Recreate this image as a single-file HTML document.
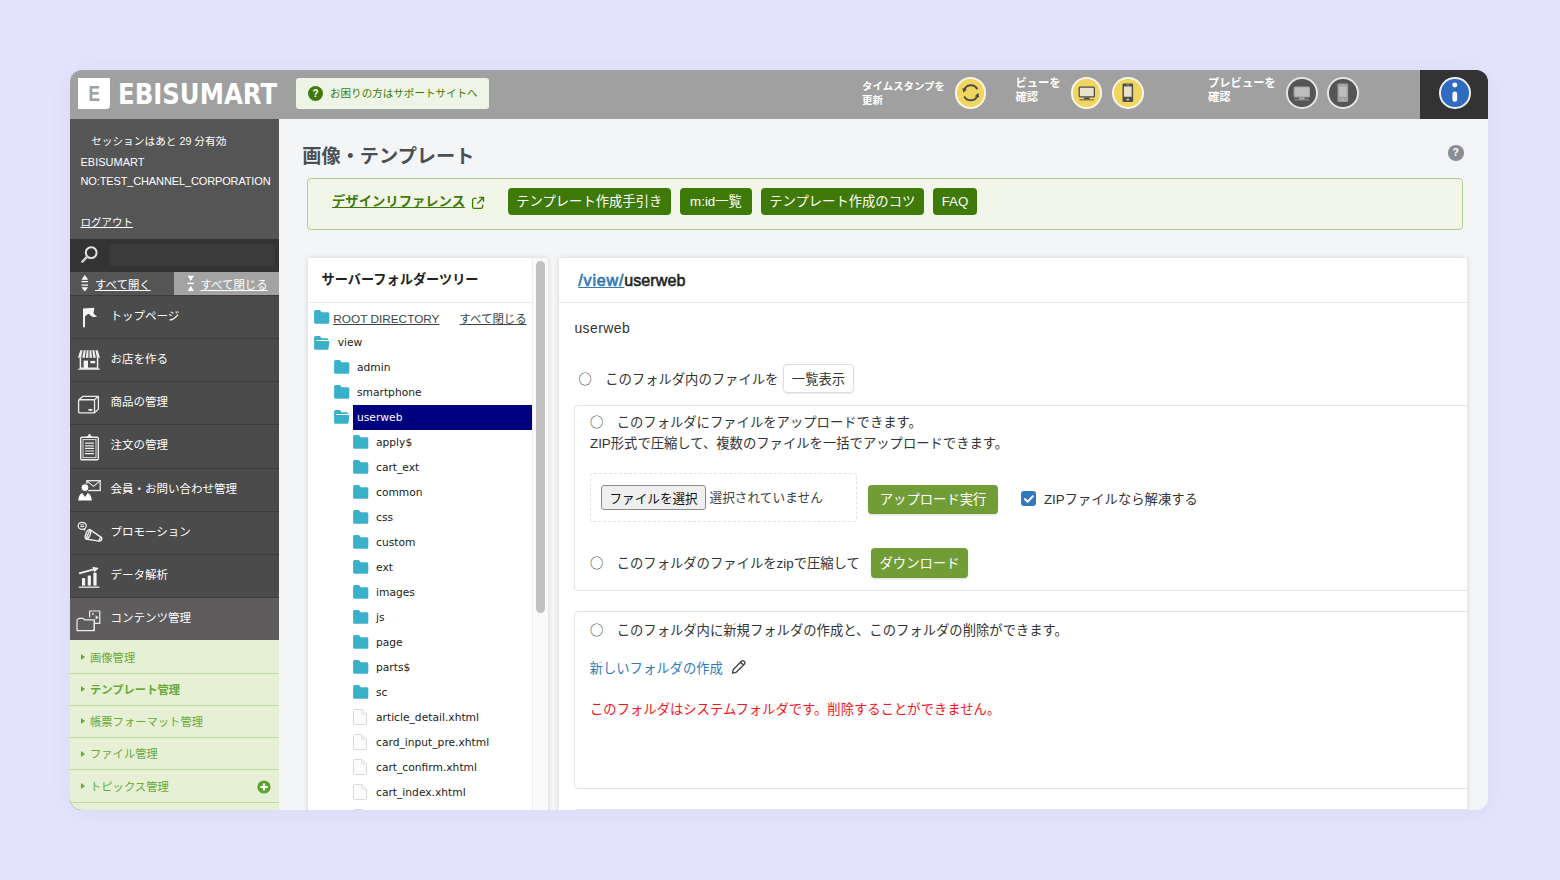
<!DOCTYPE html>
<html lang="ja">
<head>
<meta charset="utf-8">
<title>画像・テンプレート</title>
<style>
*{box-sizing:border-box;margin:0;padding:0}
html,body{width:1560px;height:880px;overflow:hidden}
body{background:#e4e4fc;font-family:"Liberation Sans","Noto Sans CJK JP",sans-serif;color:#333;font-size:13.33px}
a{color:inherit}
#win{position:absolute;left:70px;top:70px;width:1418px;height:740px;border-radius:12px;overflow:hidden;background:#f4f5f7;box-shadow:0 2px 22px rgba(110,110,220,.09)}
.abs{position:absolute}
/* header */
#hdr{position:absolute;left:0;top:0;width:1418px;height:49px;background:#a0a0a0}
#logoE{position:absolute;left:8px;top:8px;width:32px;height:30.5px;background:#fff;border-radius:0 0 4px 0;color:#a0a0a0;font-weight:bold;font-size:21.7px;line-height:32.5px;text-align:center}
#logoE span{display:inline-block;transform:scaleX(.8)}
#logoT{position:absolute;left:47.7px;top:8.3px;height:34px;line-height:34px;color:#fff;font-weight:bold;font-family:'DejaVu Sans','Liberation Sans',sans-serif;font-size:27.8px;transform:scaleX(.877);transform-origin:0 50%;white-space:nowrap}
#sup{position:absolute;left:226px;top:7.5px;width:192.5px;height:31px;background:#eff5e6;border-radius:3px;color:#3f7a08;font-size:10.55px;line-height:31px;white-space:nowrap}
#sup svg{position:absolute;left:11.5px;top:8px}
#sup span{position:absolute;left:34px;top:0}
.hl{position:absolute;color:#fff;font-weight:bold;font-size:10.67px;line-height:13.9px;white-space:nowrap;margin-top:.8px}
.cir{position:absolute;top:7.3px;width:31.6px;height:31.6px;border-radius:50%;border:2px solid #f8f5e6;background:#f0d65f}
.cir.dk{background:#555;border-color:#e6e6e6}
.cir svg{position:absolute;left:0;top:0;width:27.6px;height:27.6px}
#infoB{position:absolute;left:1350px;top:0;width:68px;height:49px;background:#333}
#infoC{position:absolute;left:19.4px;top:7.3px;width:31.6px;height:31.6px;border-radius:50%;border:2px solid #eee;background:#2f6bc0}
/* sidebar */
#side{position:absolute;left:0;top:49px;width:209px;height:691px;background:#555;color:#fff}
#side .t{position:absolute;left:10.5px;font-size:11px;white-space:nowrap;line-height:14px}
#srch{position:absolute;left:0;top:119.5px;width:209px;height:33px;background:#333}
#srch div{position:absolute;left:39px;top:5px;width:165.5px;height:22.5px;background:#3b3b3b;border-radius:4px}
#oc{position:absolute;left:0;top:152.5px;width:209px;height:23px;font-size:11.4px}
#oc .r{position:absolute;left:103.5px;top:0;width:105.5px;height:23px;background:#a3a3a3}
#oc a{position:absolute;top:5px;line-height:16px;white-space:nowrap}
.mi{position:absolute;left:0;width:209px;height:43.4px;border-top:1px solid #3c3c3c;background:#4b4b4b;font-size:11.5px;line-height:40.6px;white-space:nowrap}
.mi span{position:absolute;left:40.6px;top:0}
.mi svg{position:absolute;left:7px;top:8px}
.mi.on{background:#5e5c5c}
.si{position:absolute;left:0;width:209px;height:32.2px;border-bottom:1px solid #b9dba0;color:#6aa83a;font-size:11.3px;line-height:32px;white-space:nowrap}
.si span{position:absolute;left:20px;top:0.3px}
.si i{position:absolute;left:11px;top:12.6px;width:0;height:0;border-left:4px solid #6aa83a;border-top:3px solid transparent;border-bottom:3px solid transparent}
/* main */
#ttl{position:absolute;left:232.3px;top:73px;font-size:19.2px;font-weight:bold;color:#4a4f54;line-height:28px;white-space:nowrap}
#help{position:absolute;left:1378px;top:75px;width:15.5px;height:15.5px;border-radius:50%;background:#8a8d91;color:#fff;font-weight:bold;font-size:10.5px;line-height:15.5px;text-align:center}
#ban{position:absolute;left:237px;top:107.8px;width:1156px;height:52.2px;background:#f1f6e9;border:1px solid #aacf8f;border-radius:4px}
#ban a.l{position:absolute;left:24px;top:13px;font-weight:bold;color:#3f7a08;font-size:13.33px;line-height:20px;white-space:nowrap}
.gb{position:absolute;top:9.3px;height:27.4px;border-radius:4px;background:#3f7a08;color:#fff;font-size:13.33px;line-height:27px;text-align:center;white-space:nowrap}
.pnl{position:absolute;top:187.5px;background:#fff;box-shadow:0 0 5px rgba(0,0,0,.14)}

#lph{position:absolute;left:251.5px;top:199.7px;font-size:13.2px;font-weight:bold;color:#222;line-height:20px;white-space:nowrap}
.hr{position:absolute;height:1px;background:#e9e9e9}
#sbt{position:absolute;left:462.2px;top:187.5px;width:15.9px;height:553px;background:#fafafa;border-left:1px solid #ececec}
#sbt div{position:absolute;left:2.7px;top:3.2px;width:8.8px;height:352px;border-radius:4.5px;background:#c1c1c1}
#tree{position:absolute;left:0;top:0;width:462.2px;height:740px;overflow:hidden}
.tr{position:absolute;left:0;width:462.2px;height:25px;font-family:"DejaVu Sans","Noto Sans CJK JP",sans-serif;font-size:10.7px;line-height:25.6px;color:#1a1a1a;white-space:nowrap}
.tr span{position:absolute;top:0}
.tr .ic{position:absolute;top:5.5px}
.tr.sel span{color:#fff}
.tr.sel:before{content:"";position:absolute;left:283px;top:0.2px;width:179.2px;height:25px;background:#000080}
.tr a.rt{position:absolute;top:0;font-family:"Liberation Sans","Noto Sans CJK JP",sans-serif;font-size:11.8px;color:#3b444b;text-decoration:underline}
#rph{position:absolute;left:508.3px;top:199.9px;font-size:16.1px;font-weight:normal;-webkit-text-stroke:.55px #222;letter-spacing:.05px;line-height:20px;color:#222;white-space:nowrap}
#rph a{color:#337ab7;text-decoration:underline;letter-spacing:.8px;-webkit-text-stroke:.7px #337ab7}
.tx{position:absolute;font-size:13.33px;line-height:20px;white-space:nowrap;color:#333;margin-top:.5px}
.wb{position:absolute;background:#fff;border:1px solid #ddd;border-radius:4px;box-shadow:0 1px 2px rgba(0,0,0,.08);font-size:13.33px;text-align:center;color:#333;white-space:nowrap;display:flex;align-items:center;justify-content:center}
.ob{position:absolute;background:#719d37;border-radius:4px;box-shadow:0 1px 2px rgba(0,0,0,.15);font-size:13.33px;color:#fff;white-space:nowrap;display:flex;align-items:center;justify-content:center;padding-bottom:1px}
.bx{position:absolute;width:893.2px;border:1px solid #e3e6e8;border-right:none;border-radius:4px 0 0 4px}
#dash{position:absolute;left:520px;top:403.1px;width:266.5px;height:48.6px;border:1px dashed #e2e2e2;border-radius:4px}
#fbtn{position:absolute;left:531.4px;top:415.1px;width:104.4px;height:24.6px;background:#efefef;border:1px solid #8a8a8a;border-radius:3px;font-size:12.6px;color:#111;white-space:nowrap;display:flex;align-items:center;justify-content:center}
#cb{position:absolute;left:950.8px;top:420.5px;width:15.6px;height:15.6px;border-radius:3px;background:#3079bf}
#cb svg{position:absolute;left:0;top:0}
.o{font-family:"Noto Sans CJK JP",sans-serif}
</style>
</head>
<body>
<div id="win">
 <div id="hdr">
  <div id="logoE"><span>E</span></div>
  <div id="logoT">EBISUMART</div>
  <div id="sup"><svg width="15" height="15" viewBox="0 0 15 15"><circle cx="7.5" cy="7.5" r="7.5" fill="#3f7a08"/><text x="7.5" y="11.2" font-size="10" font-weight="bold" fill="#fff" text-anchor="middle" font-family="Liberation Sans, sans-serif">?</text></svg><span>お困りの方はサポートサイトへ</span></div>
  <div class="hl" style="left:792px;top:9.5px;font-size:10.45px">タイムスタンプを<br>更新</div>
  <div class="cir" style="left:884.5px"><svg viewBox="0 0 28 28"><g fill="none" stroke="#4d4d4d" stroke-width="2" stroke-linecap="butt"><path d="M7.2 11.6a7.2 7.2 0 0 1 13.4-1.2"/><path d="M20.8 16.4a7.2 7.2 0 0 1-13.4 1.2"/></g><path d="M5.4 9.2l4.6 1.4-3.6 3.4z" fill="#4d4d4d"/><path d="M22.6 18.8l-4.6-1.4 3.6-3.4z" fill="#4d4d4d"/></svg></div>
  <div class="hl" style="left:945.5px;top:6.5px;font-size:11.3px">ビューを<br>確認</div>
  <div class="cir" style="left:1000.8px"><svg viewBox="0 0 28 28"><rect x="6.3" y="8.2" width="15.4" height="10" rx="1" fill="#e9e3cd" stroke="#4d4d4d" stroke-width="1.3"/><rect x="11.2" y="18.8" width="5.6" height="1.9" fill="#4d4d4d"/><rect x="6.6" y="20.6" width="14.8" height="1.1" fill="#4d4d4d" opacity=".8"/></svg></div>
  <div class="cir" style="left:1042px"><svg viewBox="0 0 28 28"><rect x="8.6" y="4.6" width="10.8" height="18.8" rx="1.4" fill="#4d4d4d"/><rect x="10.1" y="7.6" width="7.8" height="10.4" fill="#e9e3cd"/><rect x="12.3" y="5.6" width="3.4" height=".9" fill="#e9e3cd" opacity=".6"/><rect x="12.6" y="20" width="2.8" height="1.7" rx=".4" fill="#e9e3cd" opacity=".8"/></svg></div>
  <div class="hl" style="left:1138px;top:6.5px;font-size:11.3px">プレビューを<br>確認</div>
  <div class="cir dk" style="left:1216px"><svg viewBox="0 0 28 28"><rect x="6.3" y="8.2" width="15.4" height="10" rx="1" fill="#bdbdbd" stroke="#a8a8a8" stroke-width="1.3"/><rect x="11.2" y="18.8" width="5.6" height="1.9" fill="#a8a8a8"/><rect x="6.6" y="20.6" width="14.8" height="1.1" fill="#a8a8a8" opacity=".8"/></svg></div>
  <div class="cir dk" style="left:1257.2px"><svg viewBox="0 0 28 28"><rect x="8.6" y="4.6" width="10.8" height="18.8" rx="1.4" fill="#a0a0a0"/><rect x="10.1" y="7.6" width="7.8" height="10.4" fill="#bdbdbd"/><rect x="12.3" y="5.6" width="3.4" height=".9" fill="#bdbdbd" opacity=".6"/><rect x="12.6" y="20" width="2.8" height="1.7" rx=".4" fill="#bdbdbd" opacity=".8"/></svg></div>
  <div id="infoB"><div id="infoC"><svg width="27.6" height="27.6" viewBox="0 0 28 28" style="position:absolute;left:0;top:0"><circle cx="14" cy="6.100" r="2.500" fill="#fff"/><path d="M14 15V20.800" stroke="#fff" stroke-width="4.800" stroke-linecap="round"/></svg></div></div>
 </div>
 <div id="side">
  <div class="t" style="left:21px;top:15px;font-size:10.7px">セッションはあと 29 分有効</div>
  <div class="t" style="top:35.5px">EBISUMART</div>
  <div class="t" style="top:55px;letter-spacing:-.13px">NO:TEST_CHANNEL_CORPORATION</div>
  <div class="t" style="top:95.5px;font-size:10.5px"><a href="#" style="text-decoration:underline">ログアウト</a></div>
  <div id="srch"><svg width="20" height="20" viewBox="0 0 20 20" style="position:absolute;left:10px;top:6.500px"><circle cx="11.200" cy="7.600" r="5.400" fill="none" stroke="#e2e2e2" stroke-width="2"/><path d="M7.300 11.600l-5 5" stroke="#cfcfcf" stroke-width="2.600" stroke-linecap="round"/></svg><div></div></div>
  <div id="oc"><div class="r"></div><svg width="7.600" height="16.800" viewBox="0 0 9 18" preserveAspectRatio="none" style="position:absolute;left:10.900px;top:3px"><path d="M4.500 0l3.900 5H.6zM4.500 18l3.900-5H.6z" fill="#fff"/><path d="M.6 7.100h7.800M.6 10.900h7.800" stroke="#fff" stroke-width="1.500"/></svg><svg width="7.600" height="16.800" viewBox="0 0 9 18" preserveAspectRatio="none" style="position:absolute;left:116.800px;top:3px"><path d="M4.500 6.400L8.200.8H.8zM4.500 11.600l3.700 5.600H.8z" fill="#fff"/><path d="M.6 9h7.800" stroke="#fff" stroke-width="1.500"/></svg><a href="#" style="left:25px">すべて開く</a><a href="#" style="left:130.5px">すべて閉じる</a></div>
  <div class="mi" style="top:175.90px"><svg style="left:6px;top:6.900px" width="26" height="26" viewBox="0 0 26 26"><path d="M7 5.600L18.200 4.800C18.600 7 17 9.600 17.800 10.800C18.600 12 20 13 21.200 13.200C19.400 14.600 16.400 14 14.600 12.400C13.600 11.400 12.600 10.800 11.600 11.200L9 13.600V24.200H7Z" fill="#f4f4f4"/></svg><span>トップページ</span></div>
  <div class="mi" style="top:219.05px"><svg style="left:7px;top:8.4px" width="26" height="26" viewBox="0 0 26 26"><path d="M3.300 3.200h17.400l2.300 7.600h-22z" fill="#eee"/><g stroke="#4b4b4b" stroke-width="1.100"><path d="M6.200 3.200l-1.600 7.600M9.200 3.200l-.9 7.600M12 3.200v7.600M14.800 3.200l.9 7.600M17.800 3.200l1.600 7.600"/></g><path d="M3.400 10.800v10.400h17.200V10.800" fill="none" stroke="#eee" stroke-width="1.500"/><rect x="6.600" y="13.600" width="4.400" height="7.600" fill="#f4f4f4"/><rect x="13.400" y="13.900" width="4.800" height="2.400" fill="#f4f4f4"/><path d="M1.200 22.200h21.600" stroke="#ddd" stroke-width="1.300"/></svg><span>お店を作る</span></div>
  <div class="mi" style="top:262.20px"><svg style="left:7.4px;top:9px" width="24.4" height="24.4" viewBox="0 0 26 26"><g fill="none" stroke="#eee" stroke-width="1.400" stroke-linejoin="round"><rect x="1.700" y="9.300" width="17" height="14" rx="1"/><path d="M1.900 9.300l4.600-3.600h16.300l-4.100 3.600M22.800 5.700v13.600l-4.100 4"/></g><rect x="12.200" y="19.200" width="4.200" height="1.800" fill="#f4f4f4"/></svg><span>商品の管理</span></div>
  <div class="mi" style="top:305.35px"><svg style="left:7px;top:6.5px" width="26" height="30" viewBox="0 0 26 30"><rect x="3.700" y="5.200" width="17.600" height="22.600" rx="1.200" fill="none" stroke="#eee" stroke-width="1.400"/><rect x="6" y="7.600" width="13" height="18" fill="none" stroke="#ddd" stroke-width="1"/><path d="M9.300 5.800c0-1.500 1.100-1.900 2-2 0-1.300.6-1.700 1.200-1.700s1.200.4 1.200 1.700c.9.100 2 .5 2 2z" fill="#eee"/><path d="M8 11.200h9M8 13.800h9M8 16.400h9M8 19h9M8 21.600h9" stroke="#eee" stroke-width="1.200"/></svg><span>注文の管理</span></div>
  <div class="mi" style="top:348.50px"><svg style="left:7px;top:9px" width="26" height="26" viewBox="0 0 26 26"><rect x="9.800" y="2.700" width="13.400" height="9.800" fill="none" stroke="#eee" stroke-width="1.300"/><path d="M10.200 3.100l6.300 5.200 6.300-5.200" fill="none" stroke="#eee" stroke-width="1.100"/><circle cx="8" cy="9.600" r="3.900" fill="#fff" stroke="#4b4b4b" stroke-width="1"/><path d="M1.200 22.600c.3-4 1.600-6.600 4-7.600l2.800 4 2.800-4c2.400 1 3.700 3.600 4 7.600z" fill="#fff"/></svg><span>会員・お問い合わせ管理</span></div>
  <div class="mi" style="top:391.65px"><svg style="left:7px;top:9.2px" width="28" height="26" viewBox="0 0 28 26"><ellipse cx="5.200" cy="4.800" rx="4" ry="3.500" fill="none" stroke="#eee" stroke-width="1.300"/><path d="M3.300 3.800h3.800M3.300 5.600h3.800" stroke="#eee" stroke-width="1"/><path d="M6.400 7.800l1.600 2.400.6-2.600" fill="#eee"/><g fill="none" stroke="#eee" stroke-width="1.400" stroke-linejoin="round"><path d="M12.900 8.600l10.700 7.300-1.700 4.200-12.800-2.100z"/><ellipse cx="11" cy="13.300" rx="2.100" ry="4.900" transform="rotate(22 11 13.300)"/><path d="M23.600 15.900c1 .4 1.400 1.400 1 2.500s-1.500 1.900-2.700 1.700"/></g></svg><span>プロモーション</span></div>
  <div class="mi" style="top:434.80px"><svg style="left:7px;top:9.5px" width="26" height="26" viewBox="0 0 26 26"><path d="M2 9.400l15.800-4.200" stroke="#f2f2f2" stroke-width="1.800"/><path d="M15.400 2.700l6.300 1.400-4.400 4.500z" fill="#f2f2f2"/><rect x="5" y="14.200" width="3.200" height="7.400" fill="#f4f4f4"/><rect x="10.700" y="11.600" width="3.200" height="10" fill="#f4f4f4"/><rect x="16.400" y="8.800" width="3.200" height="12.800" fill="#f4f4f4"/><path d="M1.700 23.200h20.700" stroke="#e4e4e4" stroke-width="1.400"/></svg><span>データ解析</span></div>
  <div class="mi on" style="top:477.95px;height:43.6px"><svg style="left:6.2px;top:7.6px" width="28" height="28" viewBox="0 0 28 28"><g fill="none" stroke="#eee" stroke-width="1.200" stroke-linejoin="round"><path d="M13.600 11.200V5h10.200v12.400h-5.400"/><path d="M1 24.600V14.200l1.800-1.800h4.300l1.500 1.400h9.700v10.800z"/><path d="M18.300 15.200v8l-1.200 1.400"/></g><path d="M19.600 9.300l3 2.100-3 2.100z" fill="#eee"/><circle cx="16.900" cy="8" r=".9" fill="#eee"/></svg><span>コンテンツ管理</span></div>
  <div style="position:absolute;left:0;top:521px;width:209px;height:170px;background:#e6f0d5"></div>
  <div class="si" style="top:522.4px"><i></i><span>画像管理</span></div>
  <div class="si" style="top:554.5px"><i></i><span style="font-weight:bold">テンプレート管理</span></div>
  <div class="si" style="top:586.9px"><i></i><span>帳票フォーマット管理</span></div>
  <div class="si" style="top:619.1px"><i></i><span>ファイル管理</span></div>
  <div class="si" style="top:651.5px"><i></i><span>トピックス管理</span><svg class="abs" style="left:186.5px;top:9px" width="14" height="14" viewBox="0 0 14 14"><circle cx="7" cy="7" r="6.600" fill="#5fa22e"/><path d="M7 3.400v7.200M3.400 7h7.200" stroke="#fff" stroke-width="2.200"/></svg></div>
  <div class="si" style="top:683.8px"></div>
 </div>
 <div id="ttl">画像・テンプレート</div>
 <div id="help">?</div>
 <div id="ban">
  <a class="l" href="#">デザインリファレンス</a><svg class="abs" style="left:162.5px;top:17px" width="14" height="14" viewBox="0 0 14 14"><path d="M5.6 2.400H3.200a1.600 1.600 0 0 0-1.600 1.600v6.800a1.600 1.600 0 0 0 1.600 1.600h6.800a1.600 1.600 0 0 0 1.600-1.600V8.400" fill="none" stroke="#3f7a08" stroke-width="1.300"/><path d="M6.400 7.600l5.400-5.400M8.200 1.500h4.300v4.300" fill="none" stroke="#3f7a08" stroke-width="1.400"/></svg>
  <div class="gb" style="left:199.5px;width:163.5px">テンプレート作成手引き</div>
  <div class="gb" style="left:372px;width:72px">m:id一覧</div>
  <div class="gb" style="left:452.5px;width:163.5px">テンプレート作成のコツ</div>
  <div class="gb" style="left:625px;width:44px">FAQ</div>
 </div>
 <div class="pnl" id="lp" style="left:237.7px;width:240.4px;height:560px">
 </div>
 <div id="lph">サーバーフォルダーツリー</div>
 <div class="hr" style="left:237.7px;top:231.5px;width:224.5px"></div>
 <div id="sbt"><div></div></div>
 <div id="tree">
  <div class="tr" style="top:236.5px"><svg class="ic"  style="left:244.3px;top:3.700px" width="16" height="14" viewBox="0 0 16 14"><path d="M1.6 0h4.3l1.7 2.2h6.2a1.5 1.5 0 0 1 1.5 1.5v8.6a1.5 1.5 0 0 1-1.5 1.5H1.6A1.5 1.5 0 0 1 .1 12.3V1.5A1.5 1.5 0 0 1 1.6 0z" fill="#3ab0c9"/></svg><a href="#" class="rt" style="left:263.3px">ROOT DIRECTORY</a><a href="#" class="rt" style="left:389.5px;font-size:11.4px">すべて閉じる</a></div>
  <div class="tr" style="top:260px"><svg class="ic" style="left:244px" width="16" height="14" viewBox="0 0 16 14"><path d="M1.6 0h4.3l1.7 2.2h5.2a1.5 1.5 0 0 1 1.5 1.5v.4H2.2v.9h12.6a.6.6 0 0 1 .6.7l-.9 6.8a1.5 1.5 0 0 1-1.5 1.3H1.6A1.5 1.5 0 0 1 .1 12.3V1.5A1.5 1.5 0 0 1 1.6 0z" fill="#3ab0c9"/></svg><span style="left:267.7px">view</span></div>
  <div class="tr" style="top:284.5px"><svg class="ic" style="left:263.8px" width="16" height="14" viewBox="0 0 16 14"><path d="M1.6 0h4.3l1.7 2.2h6.2a1.5 1.5 0 0 1 1.5 1.5v8.6a1.5 1.5 0 0 1-1.5 1.5H1.6A1.5 1.5 0 0 1 .1 12.3V1.5A1.5 1.5 0 0 1 1.6 0z" fill="#3ab0c9"/></svg><span style="left:287px">admin</span></div>
  <div class="tr" style="top:309.5px"><svg class="ic" style="left:263.8px" width="16" height="14" viewBox="0 0 16 14"><path d="M1.6 0h4.3l1.7 2.2h6.2a1.5 1.5 0 0 1 1.5 1.5v8.6a1.5 1.5 0 0 1-1.5 1.5H1.6A1.5 1.5 0 0 1 .1 12.3V1.5A1.5 1.5 0 0 1 1.6 0z" fill="#3ab0c9"/></svg><span style="left:287px">smartphone</span></div>
  <div class="tr sel" style="top:334.5px"><svg class="ic" style="left:263.8px" width="16" height="14" viewBox="0 0 16 14"><path d="M1.6 0h4.3l1.7 2.2h5.2a1.5 1.5 0 0 1 1.5 1.5v.4H2.2v.9h12.6a.6.6 0 0 1 .6.7l-.9 6.8a1.5 1.5 0 0 1-1.5 1.3H1.6A1.5 1.5 0 0 1 .1 12.3V1.5A1.5 1.5 0 0 1 1.6 0z" fill="#3ab0c9"/></svg><span style="left:287px">userweb</span></div>
  <div class="tr" style="top:359.5px"><svg class="ic" style="left:282.8px" width="16" height="14" viewBox="0 0 16 14"><path d="M1.6 0h4.3l1.7 2.2h6.2a1.5 1.5 0 0 1 1.5 1.5v8.6a1.5 1.5 0 0 1-1.5 1.5H1.6A1.5 1.5 0 0 1 .1 12.3V1.5A1.5 1.5 0 0 1 1.6 0z" fill="#3ab0c9"/></svg><span style="left:306px">apply$</span></div>
  <div class="tr" style="top:384.5px"><svg class="ic" style="left:282.8px" width="16" height="14" viewBox="0 0 16 14"><path d="M1.6 0h4.3l1.7 2.2h6.2a1.5 1.5 0 0 1 1.5 1.5v8.6a1.5 1.5 0 0 1-1.5 1.5H1.6A1.5 1.5 0 0 1 .1 12.3V1.5A1.5 1.5 0 0 1 1.6 0z" fill="#3ab0c9"/></svg><span style="left:306px">cart_ext</span></div>
  <div class="tr" style="top:409.5px"><svg class="ic" style="left:282.8px" width="16" height="14" viewBox="0 0 16 14"><path d="M1.6 0h4.3l1.7 2.2h6.2a1.5 1.5 0 0 1 1.5 1.5v8.6a1.5 1.5 0 0 1-1.5 1.5H1.6A1.5 1.5 0 0 1 .1 12.3V1.5A1.5 1.5 0 0 1 1.6 0z" fill="#3ab0c9"/></svg><span style="left:306px">common</span></div>
  <div class="tr" style="top:434.5px"><svg class="ic" style="left:282.8px" width="16" height="14" viewBox="0 0 16 14"><path d="M1.6 0h4.3l1.7 2.2h6.2a1.5 1.5 0 0 1 1.5 1.5v8.6a1.5 1.5 0 0 1-1.5 1.5H1.6A1.5 1.5 0 0 1 .1 12.3V1.5A1.5 1.5 0 0 1 1.6 0z" fill="#3ab0c9"/></svg><span style="left:306px">css</span></div>
  <div class="tr" style="top:459.5px"><svg class="ic" style="left:282.8px" width="16" height="14" viewBox="0 0 16 14"><path d="M1.6 0h4.3l1.7 2.2h6.2a1.5 1.5 0 0 1 1.5 1.5v8.6a1.5 1.5 0 0 1-1.5 1.5H1.6A1.5 1.5 0 0 1 .1 12.3V1.5A1.5 1.5 0 0 1 1.6 0z" fill="#3ab0c9"/></svg><span style="left:306px">custom</span></div>
  <div class="tr" style="top:484.5px"><svg class="ic" style="left:282.8px" width="16" height="14" viewBox="0 0 16 14"><path d="M1.6 0h4.3l1.7 2.2h6.2a1.5 1.5 0 0 1 1.5 1.5v8.6a1.5 1.5 0 0 1-1.5 1.5H1.6A1.5 1.5 0 0 1 .1 12.3V1.5A1.5 1.5 0 0 1 1.6 0z" fill="#3ab0c9"/></svg><span style="left:306px">ext</span></div>
  <div class="tr" style="top:509.5px"><svg class="ic" style="left:282.8px" width="16" height="14" viewBox="0 0 16 14"><path d="M1.6 0h4.3l1.7 2.2h6.2a1.5 1.5 0 0 1 1.5 1.5v8.6a1.5 1.5 0 0 1-1.5 1.5H1.6A1.5 1.5 0 0 1 .1 12.3V1.5A1.5 1.5 0 0 1 1.6 0z" fill="#3ab0c9"/></svg><span style="left:306px">images</span></div>
  <div class="tr" style="top:534.5px"><svg class="ic" style="left:282.8px" width="16" height="14" viewBox="0 0 16 14"><path d="M1.6 0h4.3l1.7 2.2h6.2a1.5 1.5 0 0 1 1.5 1.5v8.6a1.5 1.5 0 0 1-1.5 1.5H1.6A1.5 1.5 0 0 1 .1 12.3V1.5A1.5 1.5 0 0 1 1.6 0z" fill="#3ab0c9"/></svg><span style="left:306px">js</span></div>
  <div class="tr" style="top:559.5px"><svg class="ic" style="left:282.8px" width="16" height="14" viewBox="0 0 16 14"><path d="M1.6 0h4.3l1.7 2.2h6.2a1.5 1.5 0 0 1 1.5 1.5v8.6a1.5 1.5 0 0 1-1.5 1.5H1.6A1.5 1.5 0 0 1 .1 12.3V1.5A1.5 1.5 0 0 1 1.6 0z" fill="#3ab0c9"/></svg><span style="left:306px">page</span></div>
  <div class="tr" style="top:584.5px"><svg class="ic" style="left:282.8px" width="16" height="14" viewBox="0 0 16 14"><path d="M1.6 0h4.3l1.7 2.2h6.2a1.5 1.5 0 0 1 1.5 1.5v8.6a1.5 1.5 0 0 1-1.5 1.5H1.6A1.5 1.5 0 0 1 .1 12.3V1.5A1.5 1.5 0 0 1 1.6 0z" fill="#3ab0c9"/></svg><span style="left:306px">parts$</span></div>
  <div class="tr" style="top:609.5px"><svg class="ic" style="left:282.8px" width="16" height="14" viewBox="0 0 16 14"><path d="M1.6 0h4.3l1.7 2.2h6.2a1.5 1.5 0 0 1 1.5 1.5v8.6a1.5 1.5 0 0 1-1.5 1.5H1.6A1.5 1.5 0 0 1 .1 12.3V1.5A1.5 1.5 0 0 1 1.6 0z" fill="#3ab0c9"/></svg><span style="left:306px">sc</span></div>
  <div class="tr" style="top:634.5px"><svg class="ic" style="left:282.8px;top:4.3px" width="14" height="16" viewBox="0 0 14 16"><path d="M1.5.5h7.3l4.7 4.6v9.4a1 1 0 0 1-1 1h-11a1 1 0 0 1-1-1v-13a1 1 0 0 1 1-1z" fill="#fcfcfc" stroke="#dadada"/><path d="M8.8.5v3.6a1 1 0 0 0 1 1h3.7" fill="#f2f2f2" stroke="#dcdcdc" stroke-width=".8"/></svg><span style="left:306px">article_detail.xhtml</span></div>
  <div class="tr" style="top:659.5px"><svg class="ic" style="left:282.8px;top:4.3px" width="14" height="16" viewBox="0 0 14 16"><path d="M1.5.5h7.3l4.7 4.6v9.4a1 1 0 0 1-1 1h-11a1 1 0 0 1-1-1v-13a1 1 0 0 1 1-1z" fill="#fcfcfc" stroke="#dadada"/><path d="M8.8.5v3.6a1 1 0 0 0 1 1h3.7" fill="#f2f2f2" stroke="#dcdcdc" stroke-width=".8"/></svg><span style="left:306px">card_input_pre.xhtml</span></div>
  <div class="tr" style="top:684.5px"><svg class="ic" style="left:282.8px;top:4.3px" width="14" height="16" viewBox="0 0 14 16"><path d="M1.5.5h7.3l4.7 4.6v9.4a1 1 0 0 1-1 1h-11a1 1 0 0 1-1-1v-13a1 1 0 0 1 1-1z" fill="#fcfcfc" stroke="#dadada"/><path d="M8.8.5v3.6a1 1 0 0 0 1 1h3.7" fill="#f2f2f2" stroke="#dcdcdc" stroke-width=".8"/></svg><span style="left:306px">cart_confirm.xhtml</span></div>
  <div class="tr" style="top:709.5px"><svg class="ic" style="left:282.8px;top:4.3px" width="14" height="16" viewBox="0 0 14 16"><path d="M1.5.5h7.3l4.7 4.6v9.4a1 1 0 0 1-1 1h-11a1 1 0 0 1-1-1v-13a1 1 0 0 1 1-1z" fill="#fcfcfc" stroke="#dadada"/><path d="M8.8.5v3.6a1 1 0 0 0 1 1h3.7" fill="#f2f2f2" stroke="#dcdcdc" stroke-width=".8"/></svg><span style="left:306px">cart_index.xhtml</span></div>
  <div class="tr" style="top:734.5px"><svg class="ic" style="left:282.8px;top:4.3px" width="14" height="16" viewBox="0 0 14 16"><path d="M1.5.5h7.3l4.7 4.6v9.4a1 1 0 0 1-1 1h-11a1 1 0 0 1-1-1v-13a1 1 0 0 1 1-1z" fill="#fcfcfc" stroke="#dadada"/><path d="M8.8.5v3.6a1 1 0 0 0 1 1h3.7" fill="#f2f2f2" stroke="#dcdcdc" stroke-width=".8"/></svg></div>

 </div>
 <div class="pnl" id="rp" style="left:488.6px;width:908.4px;height:560px"></div>
 <div id="rph"><a href="#">/view/</a>userweb</div>
 <div class="hr" style="left:488.6px;top:231.5px;width:908.4px"></div>
 <div class="tx" style="left:504.4px;top:247.2px;font-size:14px;letter-spacing:.4px">userweb</div>
 <div class="tx" style="left:508.5px;top:298.4px"><span class="o">○</span>　このフォルダ内のファイルを</div>
 <div class="wb" style="left:713.4px;top:294.2px;width:70.2px;height:29px">一覧表示</div>
 <div class="bx" style="left:504.2px;top:334.9px;height:186.2px"></div>
 <div class="tx" style="left:520px;top:341.9px;line-height:20.9px"><span class="o">○</span>　このフォルダにファイルをアップロードできます。<br>ZIP形式で圧縮して、複数のファイルを一括でアップロードできます。</div>
 <div id="dash"></div>
 <div id="fbtn">ファイルを選択</div>
 <div class="tx" style="left:639.5px;top:417.4px;color:#444;font-size:12.7px">選択されていません</div>
 <div class="ob" style="left:797.8px;top:414.8px;width:130.6px;height:29px">アップロード実行</div>
 <div id="cb"><svg width="15.6" height="15.6" viewBox="0 0 16 16"><path d="M4 8.2l2.8 2.8L12.2 5.4" fill="none" stroke="#fff" stroke-width="2" stroke-linecap="round" stroke-linejoin="round"/></svg></div>
 <div class="tx" style="left:973.9px;top:419px">ZIPファイルなら解凍する</div>
 <div class="tx" style="left:520px;top:482.4px"><span class="o">○</span>　このフォルダのファイルをzipで圧縮して</div>
 <div class="ob" style="left:801px;top:478.4px;width:97px;height:29.3px">ダウンロード</div>
 <div class="bx" style="left:504.2px;top:541px;height:178.3px"></div>
 <div class="tx" style="left:520px;top:549.2px"><span class="o">○</span>　このフォルダ内に新規フォルダの作成と、このフォルダの削除ができます。</div>
 <div class="tx" style="left:519.6px;top:588.9px;color:#337ab7">新しいフォルダの作成</div>
 <svg class="abs" style="left:660.2px;top:588.4px" width="17.600" height="17.600" viewBox="0 0 16 16"><path d="M2.2 13.8l.8-3.4 7.6-7.6a1.4 1.4 0 0 1 2 0l.6.6a1.4 1.4 0 0 1 0 2l-7.6 7.6z M9.6 3.8l2.6 2.6" fill="none" stroke="#444" stroke-width="1.250" stroke-linejoin="round"/></svg>
 <div class="tx" style="left:520px;top:629.9px;color:#f5141c">このフォルダはシステムフォルダです。削除することができません。</div>
 <div class="bx" style="left:504.2px;top:739.3px;height:60px"></div>
</div>
</body>
</html>
